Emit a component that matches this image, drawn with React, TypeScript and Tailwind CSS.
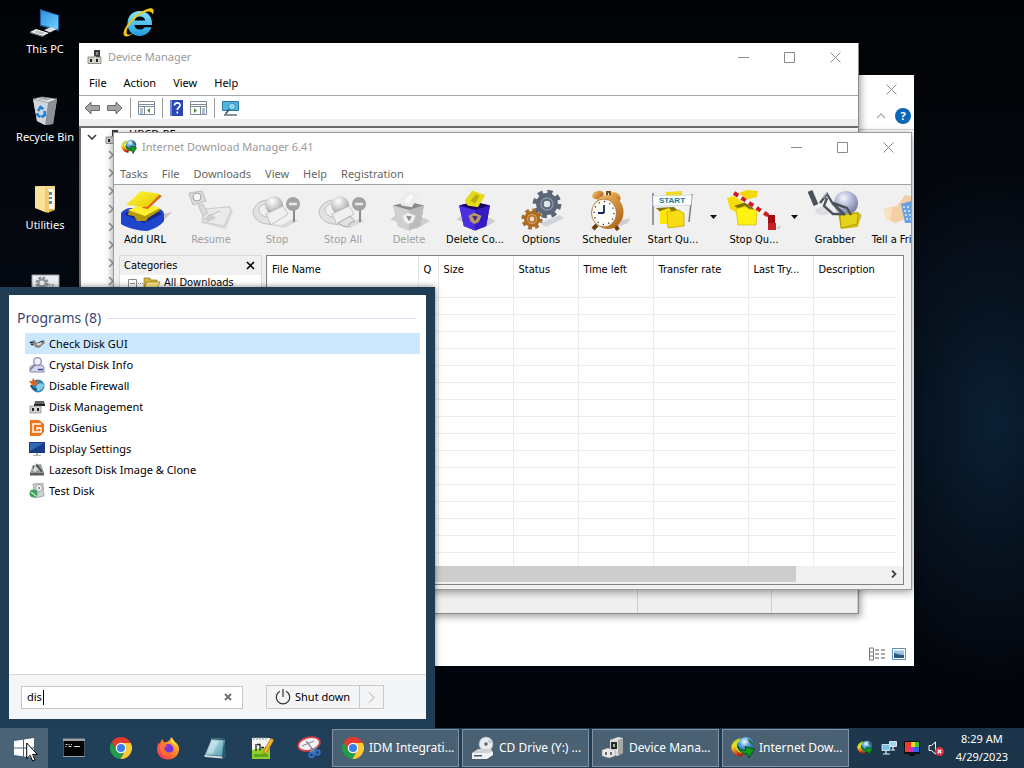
import type { ReactNode } from "react";

const ui = "font-['Noto_Sans','Open_Sans',sans-serif]";
const tahoma = "font-['DejaVu_Sans_Condensed','DejaVu_Sans',sans-serif]";

/* ---------- shared gradients ---------- */

function Gradients() {
  return (
    <svg className="absolute size-0" aria-hidden="true">
      <defs>
        <radialGradient id="globe" cx="0.4" cy="0.3" r="0.8">
          <stop offset="0" stopColor="#f2fbff" />
          <stop offset="0.4" stopColor="#5aa2dc" />
          <stop offset="1" stopColor="#0c3f8d" />
        </radialGradient>
        <radialGradient id="greyBall" cx="0.4" cy="0.3" r="0.8">
          <stop offset="0" stopColor="#ffffff" />
          <stop offset="0.6" stopColor="#c2c2c2" />
          <stop offset="1" stopColor="#868686" />
        </radialGradient>
        <radialGradient id="steelBall" cx="0.4" cy="0.3" r="0.8">
          <stop offset="0" stopColor="#f4f6ff" />
          <stop offset="0.5" stopColor="#a9b0d0" />
          <stop offset="1" stopColor="#626a90" />
        </radialGradient>
        <linearGradient id="rainbowArc" x1="0" y1="0" x2="0.4" y2="1">
          <stop offset="0" stopColor="#3fae3a" />
          <stop offset="0.4" stopColor="#f6e11c" />
          <stop offset="0.75" stopColor="#e86a17" />
          <stop offset="1" stopColor="#b91f16" />
        </linearGradient>
        <linearGradient id="screen" x1="0" y1="0" x2="1" y2="1">
          <stop offset="0" stopColor="#2f8ede" />
          <stop offset="1" stopColor="#6fd0ff" />
        </linearGradient>
        <linearGradient id="yellowSheet" x1="0" y1="0" x2="1" y2="1">
          <stop offset="0" stopColor="#fffb3a" />
          <stop offset="1" stopColor="#e8c400" />
        </linearGradient>
        <linearGradient id="orange" x1="0" y1="0" x2="1" y2="1">
          <stop offset="0" stopColor="#f9c46a" />
          <stop offset="1" stopColor="#a95a10" />
        </linearGradient>
        <linearGradient id="flame" x1="1" y1="0" x2="0" y2="1">
          <stop offset="0" stopColor="#ffe23c" />
          <stop offset="0.5" stopColor="#ff7a25" />
          <stop offset="1" stopColor="#f0236b" />
        </linearGradient>
        <linearGradient id="teal" x1="0" y1="0" x2="1" y2="1">
          <stop offset="0" stopColor="#d9f2f6" />
          <stop offset="1" stopColor="#4d9bb0" />
        </linearGradient>
        <linearGradient id="ieBlue" x1="0" y1="0" x2="0" y2="1">
          <stop offset="0" stopColor="#8be6fb" />
          <stop offset="1" stopColor="#1e9be0" />
        </linearGradient>
      </defs>
    </svg>
  );
}

/* ---------- desktop icons ---------- */

function ThisPcIcon() {
  return (
    <svg viewBox="0 0 32 32" className="size-8">
      <path d="m11 2 19 6v16l-19-5z" fill="#1d5f9c" />
      <path d="m12 3.400 17 5.100v13.800l-17-4.500z" fill="url(#screen)" />
      <path d="m15 23 7-3 6 2-7 3.500z" fill="#d9dde2" />
      <path d="m1 25 6-3 13 4-6 3z" fill="#eceff2" />
      <path d="m1 25 13 4v1L1 26z" fill="#9aa0a8" />
      <path d="m5 25 3-1.500 8 2.500-3 1.400z" fill="#b9bec5" />
    </svg>
  );
}

function RecycleBinIcon() {
  return (
    <svg viewBox="0 0 32 32" className="size-8">
      <path d="m4 4 24 0-4 25-8 1-8-4z" fill="#b7bbc0" />
      <path d="m19 7 9-3-4 25-8 1z" fill="#8d9197" />
      <path d="m4 4 15 3-3 23-8-4z" fill="#d2d5d9" />
      <path d="m4 4 9-2 15 2-9 3.500z" fill="#f2f3f4" stroke="#7d8085" strokeWidth="0.700" />
      <path d="m8 4 5-1.500 10 1.500-5 1.500z" fill="#a3a7ac" />
      <g fill="none" stroke="#1d83d6" strokeWidth="2.600">
        <path d="m9 16 2.500-4 3 2" />
        <path d="m15.500 16 .5 4-3.500 2" />
        <path d="M11.500 22 8.500 20v-2" />
      </g>
    </svg>
  );
}

function UtilitiesIcon() {
  return (
    <svg viewBox="0 0 32 32" className="size-8">
      <path d="M6 3h20v24l-5 2-15-4z" fill="#dcb24e" />
      <path d="M16 3h10v22H16z" fill="#f4d98a" />
      <path d="M18 6h7v20h-7z" fill="#f8fbff" />
      <path d="M20 9h3v3h-3zM20 14h3v2h-3zM20 18h3v3h-3z" fill="#4b8bc8" />
      <path d="M6 3.500 17 3v26.500L6 25z" fill="#fbe29a" />
      <path d="M16 3v26l4 1V8z" fill="#efcb6c" />
    </svg>
  );
}

function GearFileIcon() {
  return (
    <svg viewBox="0 0 32 32" className="size-8">
      <path d="M3 4h27v28H3z" fill="#eceff1" stroke="#9aa0a5" />
      <circle cx="13" cy="12" r="5" fill="none" stroke="#8c9399" strokeWidth="3" strokeDasharray="2.600 1.300" />
      <circle cx="13" cy="12" r="3.500" fill="none" stroke="#8c9399" strokeWidth="2" />
      <circle cx="22" cy="18" r="4" fill="none" stroke="#a6adb2" strokeWidth="3" strokeDasharray="2 1.200" />
    </svg>
  );
}

function IeIcon() {
  return (
    <svg viewBox="0 0 32 32" className="size-8">
      <path
        d="M29 18H11.500c.2 3 2.400 4.600 5.400 4.600 2.200 0 3.800-.9 4.700-2.300h6.800C26.700 25.600 22.200 29 16.700 29 9.500 29 4.500 24 4.500 16.500S9.500 4 16.700 4C24.200 4 29 9 29 16.500zM11.600 13.400h10.600c-.4-2.500-2.400-4-5.200-4-2.900 0-4.900 1.500-5.400 4z"
        fill="url(#ieBlue)"
      />
      <path
        d="M26 1.500c4-1.200 5.800 1.200 4 6C28.500 3.600 24 3 16.500 8 9 13 3.600 20.500 3.600 25.500c.2 3.400 3.700 2.300 7 .8-4 3.200-9.800 4.800-10 .8C.3 20.500 12 5.200 26 1.500z"
        fill="#f2c70f"
      />
    </svg>
  );
}

/* ---------- application icons ---------- */

function IdmIcon({ className }: { className: string }) {
  return (
    <svg viewBox="0 0 24 24" className={className}>
      <circle cx="15" cy="9" r="8" fill="url(#globe)" />
      <path d="M17 3c3 1 5 3 5.500 6-2 0-3-2-4.500-3z" fill="#2d6a3c" />
      <path d="M10 2C3 3 0 8 .5 12.500 1.500 17 5 20 11 21l1-4c-4-1-6.500-3-6.500-6.500C5.500 7 7.500 4 10 2z" fill="url(#rainbowArc)" />
      <path d="M9 4C6 6 4.500 9 5.500 12c1 2 3 4 6 5" fill="none" stroke="#c6ea3f" strokeWidth="1.500" />
      <path d="M7 10.500c2 3 5 4.500 8 3.500l-1-3.500 9.500 2.500-5.500 9-1.500-4C11 18 7.500 15 7 10.500z" fill="#149a1c" stroke="#053f0a" strokeWidth="0.800" />
    </svg>
  );
}

function ChromeIcon({ className }: { className: string }) {
  return (
    <svg viewBox="0 0 24 24" className={className}>
      <circle cx="12" cy="12" r="6" fill="#fff" />
      <path d="M12 7H21.800A11 11 0 0 0 2.770 6.010L7.670 14.500A5 5 0 0 1 12 7Z" fill="#e33b2e" />
      <path d="M2.770 6.010 7.670 14.500A5 5 0 0 0 16.330 14.500L11.430 22.990A11 11 0 0 1 2.770 6.010Z" fill="#239b4a" />
      <path d="M21.800 7H12A5 5 0 0 1 16.330 14.500L11.430 22.990A11 11 0 0 0 21.800 7Z" fill="#fcc934" />
      <circle cx="12" cy="12" r="5.200" fill="#fff" />
      <circle cx="12" cy="12" r="4" fill="#3b7ded" />
    </svg>
  );
}

function DeviceIcon({ className }: { className: string }) {
  return (
    <svg viewBox="0 0 16 16" className={className}>
      <path d="M7 1h6v7H7z" fill="#3c3c3c" />
      <path d="M9 3h2v3H9z" fill="#8c8c8c" />
      <path d="M1 8h6V7h2v1h5v6.500H1z" fill="#d6d4cf" stroke="#6c6a66" strokeWidth="0.700" />
      <path d="M3 10h2v3H3zM9 10h2v3H9z" fill="#222" />
    </svg>
  );
}

function DeviceLargeIcon() {
  return (
    <svg viewBox="0 0 24 24" className="size-6">
      <path d="m9 4 8-3 5 1v15l-6 3-7-3z" fill="#dfe0dd" />
      <path d="m17 4 5-2v15l-5 3z" fill="#a6a8a6" />
      <path d="M10 6h6v7h-6z" fill="#252a26" />
      <path d="M12 8h2v3h-2z" fill="#9fbf97" />
      <path d="m1 14 6-2 7 2v6l-6 2-7-2z" fill="#e9e9e7" stroke="#85878a" strokeWidth="0.500" />
      <path d="M4 16h2v3H4zM9 16h2v3H9z" fill="#6a6d70" />
    </svg>
  );
}

function CdDriveIcon() {
  return (
    <svg viewBox="0 0 24 24" className="size-6">
      <circle cx="15" cy="8" r="7" fill="#e7eaec" stroke="#a6abb0" strokeWidth="0.600" />
      <path d="m15 8 4-5.500a7 7 0 0 1 3 4z" fill="#bfd2dc" />
      <circle cx="15" cy="8" r="2.400" fill="#5c7385" stroke="#fff" />
      <path d="m1 17 6-4h13l2 3-5 5H2z" fill="#cfd2d5" />
      <path d="M1 17h15l6-1v3l-6 4H1z" fill="#f1f2f3" />
      <path d="M3 19h8v1.500H3z" fill="#50565c" />
    </svg>
  );
}

function FirefoxIcon() {
  return (
    <svg viewBox="0 0 24 24" className="size-6">
      <path
        d="M15 1c2 1.500 3 3 3.500 4.500C21 7 23.500 10 23 14c-.6 5.500-5 9.500-11 9.500S1 19.500 1 13.500c0-3 1-5.500 2-7l.8 1.800C4.500 6 5 4.500 6.500 3c.2 1.600.8 2.600 2 3.500C11 6 14.500 5 15 1z"
        fill="url(#flame)"
      />
      <circle cx="12.500" cy="13" r="5" fill="#7a35d8" />
      <path d="M4 9c3-2 6-1 7.500 1-2 .3-3 1.200-3.200 2.500C9 16 13 18 17 15c-1 4-4 5-7 4.500C6 19 3.500 15 4 9z" fill="#ff7139" />
      <path d="M15 2c2 2 5 5 5.500 9-1-2-3-4-5-5z" fill="#fff04a" />
    </svg>
  );
}

function CmdIcon() {
  return (
    <svg viewBox="0 0 24 24" className="size-6">
      <path d="M1 2.500h22v18.500H1z" fill="#9aa0a6" />
      <path d="M1.500 5h21v15h-21z" fill="#050505" />
      <path d="M3.500 8.500h2M6.500 8.500h1M9 8.500h1M3.500 10.500h1M6.500 10.500h3M12 10.500h6" stroke="#dcdcdc" strokeWidth="1.200" />
    </svg>
  );
}

function NotepadIcon() {
  return (
    <svg viewBox="0 0 24 24" className="size-6">
      <path d="m9 2 13 1-1 17-19-1z" fill="url(#teal)" />
      <path d="m1 19 18 1.500 1 2L2 21z" fill="#d6e4e7" />
      <path d="m9 2 13 1-.3 1.500L8.500 3.500z" fill="#31606e" />
      <path d="m21 3 2 18-3 2-1-3z" fill="#285a69" />
      <path d="m10 5 6 .5-6 12-6-.5z" fill="#fff" opacity="0.350" />
    </svg>
  );
}

function NotepadPlusIcon() {
  return (
    <svg viewBox="0 0 24 24" className="size-6">
      <path d="M2 2h18v21H2z" fill="#f6f7f3" />
      <path d="M2 14c6-2 12-1 18-4v13H2z" fill="#8fd02f" />
      <path d="M4 18h14v3H4z" fill="#5ba81d" />
      <path d="M4 1v3M7 1v3M10 1v3M13 1v3M16 1v3" stroke="#8d8d8d" />
      <path d="M6 8v7M7 8.500h3v6M11 11.500h3M15 11.500h2" fill="none" stroke="#222" strokeWidth="1.300" />
      <path d="m21 2 3 2-7 12-3 2v-4z" fill="#f0b429" stroke="#8d5a13" strokeWidth="0.500" />
    </svg>
  );
}

function SnipIcon() {
  return (
    <svg viewBox="0 0 24 24" className="size-6">
      <ellipse cx="12" cy="8" rx="11" ry="6.500" transform="rotate(-14 12 8)" fill="#f7f4f4" stroke="#d0414a" strokeWidth="1.800" />
      <path d="m5 10 12-5M9 5l8 10" stroke="#888e99" strokeWidth="1.300" />
      <path d="m14 12 4 5M20 11l-7 5" stroke="#7c8ea6" strokeWidth="1.600" />
      <circle cx="14.500" cy="19" r="2.300" fill="none" stroke="#2f74c9" strokeWidth="1.900" />
      <circle cx="20.500" cy="16.500" r="2.300" fill="none" stroke="#2f74c9" strokeWidth="1.900" />
    </svg>
  );
}

/* ---------- window caption buttons ---------- */

function CaptionButtons() {
  return (
    <div className="flex text-[#8a8a8a]">
      <button aria-label="Minimize" className="flex h-7 w-[46px] items-center justify-center">
        <svg viewBox="0 0 11 11" className="size-[11px]"><path d="M0 5.500h11" stroke="currentColor" /></svg>
      </button>
      <button aria-label="Maximize" className="flex h-7 w-[46px] items-center justify-center">
        <svg viewBox="0 0 11 11" className="size-[11px]"><path d="M.5.500h10v10H.500z" fill="none" stroke="currentColor" /></svg>
      </button>
      <CloseButton />
    </div>
  );
}

function CloseButton() {
  return (
    <button aria-label="Close" className="flex h-7 w-[46px] items-center justify-center text-[#8a8a8a]">
      <svg viewBox="0 0 11 11" className="size-[11px]"><path d="m.5.500 10 10M10.500.500l-10 10" stroke="currentColor" /></svg>
    </button>
  );
}

/* ---------- explorer window ---------- */

function ExplorerWindow() {
  return (
    <section className="absolute top-[75px] left-[200px] flex h-[591px] w-[714px] flex-col bg-white">
      <div className="flex justify-end"><CloseButton /></div>
      <div className="flex h-[26px] items-center justify-end gap-[9px] pr-[3px]">
        <svg viewBox="0 0 10 6" className="h-[6px] w-[10px]"><path d="m1 5 4-4 4 4" fill="none" stroke="#b5b5b5" strokeWidth="1.500" /></svg>
        <button aria-label="Help" className="flex size-4 items-center justify-center rounded-full bg-[#0a67b8] text-[11px] font-bold text-white">?</button>
      </div>
      <div className="flex-1 border-t border-[#d8d8d8]" />
      <div className="flex items-center justify-end gap-1.5 pr-2 pb-[5px]">
        <svg viewBox="0 0 17 14" className="h-[14px] w-[17px]">
          <path d="M.5 1h4v12h-4zM.5 5h4M.5 9h4" fill="none" stroke="#777" />
          <path d="M6 3h4M12 3h4M6 7h4M12 7h4M6 11h4M12 11h4" stroke="#555" />
        </svg>
        <svg viewBox="0 0 14 12" className="h-3 w-[14px]">
          <path d="M.5.500h13v11H.500z" fill="#fff" stroke="#5e92ba" />
          <path d="M2 2.500h10v7H2z" fill="#9cc3e6" />
          <path d="M2 5c4 1 6 2 10 2v3H2z" fill="#2b5a80" />
        </svg>
      </div>
    </section>
  );
}

/* ---------- device manager ---------- */

function DeviceToolbar() {
  const divider = <span className="h-5 w-px bg-[#9a9a9a]" />;
  return (
    <div className="flex h-[23px] items-center gap-[7px] pl-[5px]">
      <button aria-label="Back">
        <svg viewBox="0 0 16 14" className="h-[14px] w-4"><path d="m1 7 6-6v3.500h8.500v5H7V13z" fill="#a5a5a5" stroke="#6b6b6b" /></svg>
      </button>
      <button aria-label="Forward">
        <svg viewBox="0 0 16 14" className="h-[14px] w-4"><path d="M15 7 9 1v3.500H.500v5H9V13z" fill="#a5a5a5" stroke="#6b6b6b" /></svg>
      </button>
      {divider}
      <button aria-label="Show console tree">
        <svg viewBox="0 0 17 14" className="h-[14px] w-[17px]">
          <path d="M.5.500h16v13H.500zM.5 3.500h16M6.500 6v7M.5 5.500h16" fill="none" stroke="#7e8a94" />
          <path d="M2 8h3M2 10h3M2 12h3" stroke="#5d7fa4" />
          <path d="M12 7v5l-3-2.500z" fill="#4a8f38" />
        </svg>
      </button>
      {divider}
      <button aria-label="Help topics">
        <svg viewBox="0 0 13 16" className="h-4 w-[13px]">
          <path d="M0 0h13v16H0z" fill="#2a49b0" />
          <path d="M0 0h2v16H0z" fill="#6f88da" />
          <path d="M4.500 5.500c0-3.500 5.500-3.500 5.500-.3C10 7.500 7.300 7.500 7.300 10M7.300 11.500v2" fill="none" stroke="#fff" strokeWidth="1.700" />
        </svg>
      </button>
      <button aria-label="Show action pane">
        <svg viewBox="0 0 17 14" className="h-[14px] w-[17px]">
          <path d="M.5.500h16v13H.500zM.5 3.500h16M10.500 6v7M.5 5.500h16" fill="none" stroke="#7e8a94" />
          <path d="M12 8h3M12 10h3M12 12h3" stroke="#5d7fa4" />
          <path d="M4 7v5l3-2.500z" fill="#4a8f38" />
        </svg>
      </button>
      {divider}
      <button aria-label="Scan for hardware changes">
        <svg viewBox="0 0 17 16" className="h-4 w-[17px]">
          <path d="M.5 1.500h16v9H.500z" fill="#4fb7e4" stroke="#31779c" />
          <path d="M2 15h13" stroke="#60707a" strokeWidth="1.500" />
          <circle cx="10" cy="6.500" r="3.500" fill="#8fd6f2" stroke="#3c8fb4" />
          <path d="m7.500 9-4 5" stroke="#38586a" strokeWidth="1.500" />
        </svg>
      </button>
    </div>
  );
}

function DeviceManagerWindow() {
  return (
    <section className="absolute top-[43px] left-[79px] flex h-[571px] w-[780px] flex-col border-r border-b border-[#8b8b8b] bg-white shadow-[2px_3px_7px_rgba(0,0,0,0.35)]">
      <header className="flex items-center justify-between pl-2">
        <h2 className="flex items-center gap-[5px] text-[#999]">
          <DeviceIcon className="size-4" />Device Manager
        </h2>
        <CaptionButtons />
      </header>
      <nav className="flex h-6 items-center gap-[17px] pl-2.5 text-black">
        <button>File</button><button>Action</button><button>View</button><button>Help</button>
      </nav>
      <div className="border-t border-[#a8a8a8]"><DeviceToolbar /></div>
      <div className="h-[7px] bg-[#efefef]" />
      <div className="flex-1 border-t-2 border-l-2 border-[#6d6d6d] pl-1.5">
        <div className="flex h-[18px] items-center gap-2">
          <svg viewBox="0 0 10 6" className="h-[6px] w-[10px]"><path d="m1 1 4 4 4-4" fill="none" stroke="#444" strokeWidth="1.700" /></svg>
          <DeviceIcon className="size-4" />
          <span className="self-start leading-3">HBCD-PE</span>
        </div>
        <ul className="pl-[18px]">
          {[0, 1, 2, 3, 4, 5, 6, 7].map((n) => (
            <li key={n} className="flex h-[18px] items-center pl-[3px]">
              <svg viewBox="0 0 6 10" className="h-[10px] w-[6px]"><path d="m1 1 4 4-4 4" fill="none" stroke="#a0a0a0" strokeWidth="1.700" /></svg>
            </li>
          ))}
        </ul>
      </div>
      <footer className="flex h-[24px] justify-end bg-[#efefef]">
        <span className="w-[134px] border-l border-[#cfcfcf]" />
        <span className="w-[87px] border-x border-[#cfcfcf]" />
      </footer>
    </section>
  );
}

/* ---------- download manager toolbar art ---------- */

function AddUrlArt() {
  return (
    <svg viewBox="0 0 54 44" className="h-11 w-[54px]">
      <path d="m42 26 12-3-12 12z" fill="#c4c4c4" />
      <path d="M3 24c2-3 6-5 10-5h25c4 0 8 3 8 6v7c-4 5-10 8-17 10-8 0-20-3-26-7z" fill="#1f45cc" />
      <path d="m6 25 8-4h25l5 4-18 9z" fill="#12298c" />
      <path d="m10 26 6 1 3 5 9 0 2-3 13-8-14-7-18 7z" fill="#b79a00" />
      <path d="m10 21 17-6 15 4-15 8z" fill="#fff12e" />
      <path d="m40 5 4 2-14 13-6-1z" fill="#d86a20" />
      <path d="M8 16 23 2l19 3-13 13z" fill="url(#yellowSheet)" />
    </svg>
  );
}

function ResumeArt() {
  return (
    <svg viewBox="0 0 54 44" className="h-11 w-[54px]">
      <path d="m19 20 27-3 3 5-7 18-25-6z" fill="#d9d9d9" />
      <path d="m20 20 25-2 2 3-7 16-21-4z" fill="#eaeaea" stroke="#c4c4c4" strokeWidth="0.700" />
      <path d="M5 4 18 2l4 10-13 4z" fill="#dcdcdc" stroke="#b2b2b2" strokeWidth="0.800" />
      <circle cx="13" cy="8" r="4" fill="#f8f8f8" stroke="#a0a0a0" />
      <path d="m14 16 5-1 5 9-5 3z" fill="#dadada" stroke="#b8b8b8" strokeWidth="0.700" />
      <path d="m19 30 8-5 5 4-8 4z" fill="#cfcfcf" />
      <path d="m24 27 12-5" stroke="#bebebe" />
    </svg>
  );
}

function StopArt({ all = false }: { all?: boolean }) {
  return (
    <svg viewBox="0 0 54 44" className="h-11 w-[54px]">
      <path d="m12 34 20 2 12-7 4 3-14 7z" fill="#d9d9d9" />
      <path d="M3 23c1-7 8-12 15-12l-3 4c-4 1-7 4-6 7 1 4 6 7 12 6v7C12 36 3 30 3 23z" fill="#e2e2e2" stroke="#b0b0b0" strokeWidth="0.800" />
      <circle cx="24" cy="16" r="9" fill="url(#greyBall)" />
      <path d="m16 25 17-8 5 8-17 11z" fill="#f0f0f0" stroke="#b5b5b5" strokeWidth="0.800" />
      {all && <path d="m22 34 12-7 5 5-5 2-2 4-5-1z" fill="#e1e1e1" stroke="#999" strokeWidth="0.800" />}
      <path d="M44 18v15" stroke="#8a8a8a" strokeWidth="2" />
      <circle cx="43" cy="15" r="7" fill="#a2a2a2" />
      <path d="M39 15h8" stroke="#e9e9e9" strokeWidth="2.500" />
    </svg>
  );
}

function BinArt({ colored = false }: { colored?: boolean }) {
  return (
    <svg viewBox="-1 0 58 46" className="h-11 w-[54px]">
      <path d="m8 32 8-6 30 5 4 3-14 8z" fill="#cecece" />
      <path d="m11 17 16-4 17 4-4 22-12 5-12-5z" fill={colored ? "#2c12a8" : "#b2b2b2"} />
      <path d="m11 17 16-4 17 4-16 5z" fill={colored ? "#17075f" : "#8b8b8b"} />
      <path d="M17 12 25 1l14 5-8 13-11-2z" fill={colored ? "#e4d91a" : "#ececec"} />
      <path d="m23 12 6-7 4 2-5 8z" fill={colored ? "#b8b00a" : "#f9f9f9"} />
      <path d="m11 17 17 5v22l-12-5z" fill={colored ? "#4a2fe0" : "#d0d0d0"} />
      <path d="m44 17-16 5v22l12-5z" fill={colored ? "#351bc4" : "#bcbcbc"} />
      <path d="m21 28 6-3 8 3-3 7-5 2-4-3z" fill={colored ? "#b59a68" : "#f0f0f0"} />
      <path d="m25 28 6 1-3 5z" fill={colored ? "#40258c" : "#8a8a8a"} />
    </svg>
  );
}

function Gear({ cx, cy, r, fill, hole }: { cx: number; cy: number; r: number; fill: string; hole: string }) {
  return (
    <g>
      <circle cx={cx} cy={cy} r={r} fill="none" stroke={fill} strokeWidth={r * 0.5} strokeDasharray={`${r * 0.42} ${r * 0.365}`} />
      <circle cx={cx} cy={cy} r={r * 0.6} fill="none" stroke={fill} strokeWidth={r * 0.7} />
      <circle cx={cx} cy={cy} r={r * 0.28} fill={hole} />
    </g>
  );
}

function OptionsArt() {
  return (
    <svg viewBox="0 0 54 44" className="h-11 w-[54px]">
      <path d="m26 34 20-8 4 3-18 9z" fill="#d0d4dc" />
      <Gear cx={33} cy={15} r={11.5} fill="#5b6779" hole="#dfe3ea" />
      <circle cx="33" cy="15" r="6" fill="none" stroke="#8793a6" strokeWidth="1.500" />
      <Gear cx={18} cy={30} r={8.5} fill="#ab6a26" hole="#f0dcc4" />
      <circle cx="18" cy="30" r="4.500" fill="none" stroke="#d59a53" strokeWidth="1.300" />
    </svg>
  );
}

function SchedulerArt() {
  return (
    <svg viewBox="0 0 54 44" className="h-11 w-[54px]">
      <path d="m38 32 12-3-2 5-12 5z" fill="#cfcfd4" />
      <path d="m17 36-4 4M35 36l3 5" stroke="#6b3a0a" strokeWidth="4" />
      <ellipse cx="18" cy="6" rx="6" ry="4" transform="rotate(-20 18 6)" fill="url(#orange)" />
      <ellipse cx="35" cy="8" rx="6" ry="4.500" transform="rotate(32 35 8)" fill="url(#orange)" />
      <path d="M27 7V3h3v4" fill="none" stroke="#7d4a14" strokeWidth="2" />
      <ellipse cx="28" cy="23" rx="15.500" ry="17" fill="url(#orange)" />
      <ellipse cx="24" cy="24" rx="12.500" ry="14" fill="#fffdf8" stroke="#95520f" strokeWidth="0.700" />
      <ellipse cx="24" cy="24" rx="10" ry="11.500" fill="none" stroke="#3a3a3a" strokeWidth="1.300" strokeDasharray="1.300 4.300" />
      <path d="M24 24v-8M24 24h-6" stroke="#10256e" strokeWidth="1.800" />
    </svg>
  );
}

function StartQueueArt() {
  return (
    <svg viewBox="0 0 54 44" className="h-11 w-[54px]">
      <path d="M7 4v32M46 5l-3 28" stroke="#777b8a" strokeWidth="1.500" />
      <path d="m20 3 16-1v6H20z" fill="#efdc20" />
      <path d="m10 19 18-1 8 8-14 4z" fill="#857210" />
      <path d="m14 22 9-3 3 4 12 0v12H14z" fill="#ffe60a" />
      <path d="m21 23 12-2 5 4v12l-16 2z" fill="#f7db13" stroke="#bc9e00" strokeWidth="0.700" />
      <path d="m7 7 39-1-1 10L7 17z" fill="#fafeff" stroke="#b2c3cc" strokeWidth="0.500" />
      <text x="26" y="14" textAnchor="middle" fill="#1b7896" className="text-[8px] font-bold font-['Liberation_Sans',sans-serif]">START</text>
    </svg>
  );
}

function StopQueueArt() {
  return (
    <svg viewBox="0 0 54 44" className="h-11 w-[54px]">
      <path d="m12 4 8-3 11 1-1 6-12 3z" fill="#f2d80a" />
      <path d="m0 9 7-2 6 4 7 7-6 8-11-6z" fill="#f6dc0b" />
      <path d="m7 17 12-4 9 5-6 7z" fill="#827108" />
      <path d="m9 20 9-3 4 3 8 1-1 15-18 0z" fill="#fff112" stroke="#cbb100" strokeWidth="0.600" />
      <path d="m7 4 38 25" stroke="#f6f2f2" strokeWidth="4" />
      <path d="m7 4 38 25" stroke="#ce1a21" strokeWidth="4" strokeDasharray="5 4" />
      <path d="M41 26h7v10h-7z" fill="#a30b12" />
      <path d="M41 34h8v7h-8z" fill="#c32228" />
      <path d="m49 40 4-4v4z" fill="#ccc" />
    </svg>
  );
}

function GrabberArt() {
  return (
    <svg viewBox="0 0 54 44" className="h-11 w-[54px]">
      <ellipse cx="15" cy="22" rx="8" ry="4" fill="#dddde2" />
      <path d="m46 36 6-12 2 3-5 10z" fill="#c8c8c8" />
      <circle cx="38" cy="14" r="12" fill="url(#steelBall)" />
      <path d="m30 25 20-2 3 3-3 12-17 2z" fill="#d3bf0c" />
      <path d="m32 26 18-2-1 11-16 4z" fill="#e6d41c" stroke="#998900" strokeWidth="0.700" />
      <path d="m2 2 6 14" stroke="#4b515a" strokeWidth="5" />
      <path d="m12 14 7-9 6 10 12 11M19 9l-3 8 9 8 11 0M25 14l14 5 4 7" fill="none" stroke="#4d535d" strokeWidth="2.400" />
      <path d="m15 9 4-5" stroke="#9aa0ab" strokeWidth="1.500" />
    </svg>
  );
}

function TellFriendArt() {
  return (
    <svg viewBox="0 0 54 44" className="h-11 w-[54px]">
      <path d="m9 20 14-3 8-11 10 2v26l-12-3-8 3-7-4z" fill="#f3cfa3" />
      <path d="m9 20 9-1-2 12-4 0z" fill="#f9e2c3" />
      <path d="m27 15 20-6v25l-16 0z" fill="#6aa1de" />
      <path d="M29 18h10M30 22h9M31 26h9M32 30h8" stroke="#d8ebff" strokeWidth="1.500" strokeDasharray="2 2" />
    </svg>
  );
}

type Tool = { label: string; art: ReactNode; disabled?: boolean; menu?: boolean };

const tools: Tool[] = [
  { label: "Add URL", art: <AddUrlArt /> },
  { label: "Resume", art: <ResumeArt />, disabled: true },
  { label: "Stop", art: <StopArt />, disabled: true },
  { label: "Stop All", art: <StopArt all />, disabled: true },
  { label: "Delete", art: <BinArt />, disabled: true },
  { label: "Delete Co...", art: <BinArt colored /> },
  { label: "Options", art: <OptionsArt /> },
  { label: "Scheduler", art: <SchedulerArt /> },
  { label: "Start Qu...", art: <StartQueueArt />, menu: true },
  { label: "Stop Qu...", art: <StopQueueArt />, menu: true },
  { label: "Grabber", art: <GrabberArt /> },
  { label: "Tell a Friend", art: <TellFriendArt /> },
];

function IdmToolbar() {
  return (
    <div className={`-ml-0.5 flex h-[70px] shrink-0 overflow-hidden ${tahoma}`}>
      {tools.map((tool) => (
        <div key={tool.label} className="flex shrink-0">
          <button
            disabled={tool.disabled}
            className="flex w-[66px] flex-col items-center pt-1 leading-[14px] whitespace-nowrap text-black disabled:text-[#a0a0a0]"
          >
            {tool.art}
            {tool.label}
          </button>
          {tool.menu && (
            <button aria-label={`${tool.label} menu`} className="flex w-[15px] justify-center pt-[30px]">
              <svg viewBox="0 0 7 4" className="h-1 w-[7px]"><path d="M0 0h7L3.500 4z" fill="#111" /></svg>
            </button>
          )}
        </div>
      ))}
    </div>
  );
}

const columns = [
  { name: "File Name", width: "w-[151px]" },
  { name: "Q", width: "w-5" },
  { name: "Size", width: "w-[75px]" },
  { name: "Status", width: "w-[65px]" },
  { name: "Time left", width: "w-[75px]" },
  { name: "Transfer rate", width: "w-[95px]" },
  { name: "Last Try...", width: "w-[65px]" },
  { name: "Description", width: "" },
];

function DownloadList() {
  return (
    <div className={`flex min-w-0 flex-1 flex-col border border-[#828282] bg-white ${tahoma}`}>
      <div className="flex-1 overflow-hidden pr-1.5">
        <table className="w-full table-fixed border-collapse">
          <thead>
            <tr className="h-6">
              {columns.map((c) => (
                <th
                  key={c.name}
                  className={`${c.width} border-r border-[#e2e2e2] pt-[3px] pl-[5px] text-left font-normal whitespace-nowrap last:border-r-0`}
                >
                  {c.name}
                </th>
              ))}
            </tr>
          </thead>
          <tbody>
            {Array.from({ length: 17 }, (_, row) => (
              <tr key={row} className="h-[17px] border-b border-[#ececec]">
                {columns.map((c) => (
                  <td key={c.name} className="border-r border-[#ececec] p-0 last:border-r-0" />
                ))}
              </tr>
            ))}
          </tbody>
        </table>
      </div>
      <div className="flex h-4 shrink-0 items-center justify-end bg-[#f0f0f0] pr-1.5">
        <div className="mr-[95px] h-full flex-1 bg-[#cdcdcd]" />
        <svg viewBox="0 0 6 8" className="h-2 w-[6px]"><path d="m1 .5 3.500 3.500L1 7.500" fill="none" stroke="#444" strokeWidth="1.800" /></svg>
      </div>
      <div className="h-[2px] bg-[#f0f0f0]" />
    </div>
  );
}

function IdmWindow() {
  return (
    <section className="absolute top-[132px] left-[113px] flex h-[458px] w-[799px] flex-col border border-[#9b9b9b] bg-[#f0f0f0] shadow-[0_2px_8px_rgba(0,0,0,0.4)]">
      <header className="flex items-center justify-between bg-white pl-[7px]">
        <h2 className="flex items-center gap-[5px] text-[#999]">
          <IdmIcon className="size-4" />Internet Download Manager 6.41
        </h2>
        <CaptionButtons />
      </header>
      <nav className="flex h-6 items-center gap-3.5 border-b border-[#a3a3a3] bg-white pt-0.5 pl-1.5 text-[#666]">
        <button>Tasks</button><button>File</button><button>Downloads</button>
        <button>View</button><button>Help</button><button>Registration</button>
      </nav>
      <IdmToolbar />
      <div className="flex min-h-0 flex-1 gap-1 pr-[7px] pb-1 pl-[5px]">
        <aside className={`w-[143px] border border-[#dadada] ${tahoma}`}>
          <div className="flex h-[19px] items-center justify-between pr-1.5 pl-1">
            <span>Categories</span>
            <button aria-label="Close categories">
              <svg viewBox="0 0 9 9" className="size-[9px]"><path d="m1 1 7 7M8 1 1 8" stroke="#000" strokeWidth="1.600" /></svg>
            </button>
          </div>
          <div className="flex h-4 items-center gap-1 bg-white pl-2">
            <svg viewBox="0 0 32 14" className="h-[14px] w-8">
              <path d="M.5 3.500h8v8h-8zM2 7.500h5" fill="#fff" stroke="#8a8a8a" />
              <path d="M10 7.500h6" stroke="#999" strokeDasharray="1 1" />
              <path d="M16 2h6l1 2h6v9H16z" fill="#d9b53c" stroke="#8f7420" strokeWidth="0.700" />
              <path d="M19 6h13l-3 7H16z" fill="#ffe987" stroke="#8f7420" strokeWidth="0.700" />
            </svg>
            <span>All Downloads</span>
          </div>
        </aside>
        <DownloadList />
      </div>
    </section>
  );
}

/* ---------- start menu ---------- */

function ProgramIcon({ children }: { children: ReactNode }) {
  return <svg viewBox="0 0 16 16" className="size-4 shrink-0">{children}</svg>;
}

const programs: { name: string; icon: ReactNode }[] = [
  {
    name: "Check Disk GUI",
    icon: (
      <ProgramIcon>
        <path d="m0 6 5-2 3 3 7-3 1 3-6 5-4-1-1-2-2 1z" fill="#85898c" />
        <path d="M1 6.500h3M2 8.500h2M9 7l5-2M8 10l5-3" stroke="#2a2c2e" strokeWidth="1.200" />
        <path d="m7 8 5-2 1 2-4 2z" fill="#d6dadd" />
      </ProgramIcon>
    ),
  },
  {
    name: "Crystal Disk Info",
    icon: (
      <ProgramIcon>
        <path d="m1 10 3-2h9l2 2v5H1z" fill="#d6d7ea" stroke="#6e6ea8" strokeWidth="0.800" />
        <circle cx="8.500" cy="4.500" r="3.800" fill="#eef1fb" stroke="#8d8fae" strokeWidth="1.300" />
        <path d="m6 8-5 5" stroke="#8083a5" strokeWidth="1.700" />
        <path d="M9 12.500h5" stroke="#4141a4" strokeWidth="1.500" />
      </ProgramIcon>
    ),
  },
  {
    name: "Disable Firewall",
    icon: (
      <ProgramIcon>
        <circle cx="9" cy="8" r="6.500" fill="#2b83b7" />
        <path d="M7 8c3-4 7-3 8-1-1 4-4 6-7 6z" fill="#83cdeb" />
        <path d="m0 3 3 0 1-3 3 4 3-2-2 5-4 1z" fill="#d8672a" />
        <path d="M2 7c1 4 4 5 6 4" fill="none" stroke="#19597f" strokeWidth="2" />
      </ProgramIcon>
    ),
  },
  {
    name: "Disk Management",
    icon: (
      <ProgramIcon>
        <path d="m6 2 9 0 1 4-4 1H5z" fill="#646464" />
        <path d="M5 5h11v2H5z" fill="#222" />
        <path d="M1 7h11v7H1z" fill="#d3d3d0" stroke="#777" strokeWidth="0.600" />
        <path d="M3 9h2v3H3zM8 9h2v3H8z" fill="#222" />
      </ProgramIcon>
    ),
  },
  {
    name: "DiskGenius",
    icon: (
      <ProgramIcon>
        <path d="M1 0h9l5 4v8l-4 4H1z" fill="#ed751c" />
        <path d="M12 4H4v8h8V8H8v2" fill="none" stroke="#fff" strokeWidth="1.400" />
      </ProgramIcon>
    ),
  },
  {
    name: "Display Settings",
    icon: (
      <ProgramIcon>
        <path d="M0 1h16v11H0z" fill="#183d82" />
        <path d="M1 2h14L1 10z" fill="#3268b5" />
        <path d="M7 12h2v2h3v1H4v-1h3z" fill="#a7b5c2" />
      </ProgramIcon>
    ),
  },
  {
    name: "Lazesoft Disk Image & Clone",
    icon: (
      <ProgramIcon>
        <path d="m1 11 3-8 8-1 3 9v1H1z" fill="#9ca09c" />
        <path d="m4 4 3 5 1-6 5 7" fill="none" stroke="#474d48" strokeWidth="1.400" />
        <path d="m6 3 3 4-2 3-3-1z" fill="#d9e0da" />
        <path d="M1 11h14v2.500H1z" fill="#5a5d5a" />
      </ProgramIcon>
    ),
  },
  {
    name: "Test Disk",
    icon: (
      <ProgramIcon>
        <path d="m4 1 10-1 1 13-9 2z" fill="#ccd0d1" stroke="#858a8c" strokeWidth="0.600" />
        <circle cx="10" cy="5" r="3.500" fill="#edf0f1" stroke="#8b9091" strokeWidth="0.800" />
        <circle cx="10" cy="5" r="1" fill="#777" />
        <circle cx="4.500" cy="10.500" r="4" fill="#3aa05c" />
        <path d="m2 9 5 4" fill="none" stroke="#c9efd4" strokeWidth="1.200" />
      </ProgramIcon>
    ),
  },
];

function StartMenu() {
  return (
    <section className="absolute bottom-0 left-0 flex h-[441px] w-[435px] flex-col bg-[#203d56] p-[9px] pt-2 shadow-[0_0_6px_rgba(0,0,0,0.5)]">
      <div className="flex flex-1 flex-col bg-white pt-3">
        <h2 className="flex items-center gap-1.5 pr-2.5 pl-2 text-[14px] leading-[22px] text-[#3d4572]">
          Programs (8)
          <span className="h-px flex-1 bg-[#d8dfee]" />
        </h2>
        <ul className="mt-1 pr-1.5 pl-4">
          {programs.map((p, i) => (
            <li key={p.name}>
              <button className={`flex h-[21px] w-full items-center gap-1 pl-1 text-left ${i === 0 ? "bg-[#cce8ff]" : ""}`}>
                {p.icon}
                {p.name}
              </button>
            </li>
          ))}
        </ul>
        <div className="mt-auto flex h-[45px] items-center gap-[23px] border-t border-[#dadada] bg-[#f4f5f6] px-3">
          <div className="flex h-[23px] w-[222px] items-center border border-[#c6c6c6] bg-white px-[5px]">
            <label className="flex min-w-0 flex-1 items-center">
              <span className="sr-only">Search programs</span>
              <input defaultValue="dis" className="w-4 bg-transparent outline-none" />
              <span className="h-[15px] w-px bg-black" />
            </label>
            <button aria-label="Clear search" className="px-[5px]">
              <svg viewBox="0 0 8 8" className="size-2"><path d="m1 1 6 6M7 1 1 7" stroke="#6e6e6e" strokeWidth="2" /></svg>
            </button>
          </div>
          <div className="flex h-6 border border-[#c9c9c9]">
            <button className="flex w-[92px] items-center gap-1 pl-2">
              <svg viewBox="0 0 16 16" className="size-4">
                <path d="M5 2.200A6.700 6.700 0 1 0 11 2.200M8 0v8" fill="none" stroke="#333" strokeWidth="1.200" />
              </svg>
              Shut down
            </button>
            <button aria-label="More power options" className="flex w-6 items-center justify-center border-l border-[#c9c9c9]">
              <svg viewBox="0 0 7 11" className="h-[11px] w-[7px]"><path d="m1 .500 5 5-5 5" fill="none" stroke="#a5a5a5" /></svg>
            </button>
          </div>
        </div>
      </div>
    </section>
  );
}

/* ---------- taskbar ---------- */

const pinned = [
  { name: "Command Prompt", icon: <CmdIcon /> },
  { name: "Chrome", icon: <ChromeIcon className="size-6" /> },
  { name: "Firefox", icon: <FirefoxIcon /> },
  { name: "Notepad", icon: <NotepadIcon /> },
  { name: "Notepad++", icon: <NotepadPlusIcon /> },
  { name: "Snipping Tool", icon: <SnipIcon /> },
];

const tasks = [
  { name: "IDM Integrati...", icon: <ChromeIcon className="size-6" /> },
  { name: "CD Drive (Y:) ...", icon: <CdDriveIcon /> },
  { name: "Device Mana...", icon: <DeviceLargeIcon /> },
  { name: "Internet Dow...", icon: <IdmIcon className="size-6" /> },
];

function Taskbar() {
  return (
    <footer className="relative flex h-10 items-stretch bg-linear-to-r from-[#203f59] via-[#213e57] to-[#1c3449] text-white">
      <button aria-label="Start" className="relative flex w-12 items-center justify-center bg-[#4b6376]">
        <svg viewBox="0 0 20 20" className="size-5">
          <path d="m0 3 9-1.300V9.500H0zM10 1.500 20 0v9.500H10zM0 10.500h9v7.800L0 17zM10 10.500h10V20l-10-1.500z" fill="#fff" />
        </svg>
        <svg viewBox="0 0 12 20" className="absolute top-3.5 left-[26px] h-5 w-3">
          <path d="M.7 1v15.500l3.500-3.200 2.400 5.700 2.400-1-2.400-5.600h4.700z" fill="#fff" stroke="#000" />
        </svg>
      </button>
      <div className="flex pl-0.5">
        {pinned.map((p) => (
          <button key={p.name} aria-label={p.name} className="flex w-[47px] items-center justify-center">{p.icon}</button>
        ))}
      </div>
      <div className="flex gap-[3px] py-px text-[12px]">
        {tasks.map((t) => (
          <button key={t.name} className="flex w-[127px] items-center gap-1 border border-[#8294a3] bg-[#4a6073] pl-2 whitespace-nowrap">
            {t.icon}
            {t.name}
          </button>
        ))}
      </div>
      <div className="flex flex-1 items-center justify-between pr-4 pl-2">
        <IdmIcon className="size-4" />
        <svg viewBox="0 0 16 16" className="size-4">
          <path d="M8.500 1.500h7v5h-7z" fill="#9fd4ee" stroke="#fff" strokeWidth="0.800" />
          <path d="M1 4.500h8v6H1z" fill="#7cc0e4" stroke="#e7f5fc" strokeWidth="0.800" />
          <path d="M5 11v2.500M2 14h7M12 7v2.500M10 10h4" stroke="#e7f5fc" strokeWidth="1.200" />
        </svg>
        <svg viewBox="0 0 16 16" className="size-4">
          <path d="M0 1h16v13H0z" fill="#111" />
          <path d="M1 2h6v5H1z" fill="#ed3c22" /><path d="M7 2h4v5H7z" fill="#e8df27" /><path d="M11 2h4v5h-4z" fill="#45c33c" />
          <path d="M1 7h5v5H1z" fill="#e0452f" /><path d="M6 7h4v5H6z" fill="#cb2ac4" /><path d="M10 7h5v5h-5z" fill="#2c63e6" />
          <path d="M5 15h6" stroke="#111" strokeWidth="2" />
        </svg>
        <svg viewBox="0 0 16 16" className="size-4">
          <path d="M1 5.500h2.500L7.500 2v12l-4-3.500H1z" fill="none" stroke="#fff" />
          <circle cx="11.500" cy="11.500" r="4.500" fill="#d9303a" />
          <path d="m9.700 9.700 3.600 3.600M13.300 9.700l-3.600 3.600" stroke="#fff" strokeWidth="1.300" />
        </svg>
        <time className="pl-1 text-center leading-[18px]">8:29 AM<br />4/29/2023</time>
      </div>
    </footer>
  );
}

/* ---------- desktop ---------- */

const desktopItems = [
  { name: "This PC", icon: <ThisPcIcon /> },
  { name: "", icon: <IeIcon /> },
  { name: "Recycle Bin", icon: <RecycleBinIcon /> },
  null,
  { name: "Utilities", icon: <UtilitiesIcon /> },
  null,
  { name: "", icon: <GearFileIcon /> },
];

export default function App() {
  return (
    <div className={`flex min-h-screen flex-col overflow-hidden bg-[#02040a] text-[11px] leading-[16px] text-black ${ui}`}>
      <Gradients />
      <main className="relative flex-1 bg-[radial-gradient(ellipse_150px_260px_at_97%_58%,#0b2034_0%,#07121f_50%,transparent_100%),linear-gradient(180deg,#020306_0%,#050a14_50%,#02040a_100%)]">
        <div className="grid w-[184px] auto-rows-[88px] grid-cols-2 gap-x-1">
          {desktopItems.map((item, i) =>
            item ? (
              <button key={i} aria-label={item.name || "Shortcut"} className="flex flex-col items-center justify-start pt-[7px] leading-5 text-white">
                {item.icon}
                {item.name}
              </button>
            ) : (
              <span key={i} />
            ),
          )}
        </div>
        <ExplorerWindow />
        <DeviceManagerWindow />
        <IdmWindow />
        <StartMenu />
      </main>
      <Taskbar />
    </div>
  );
}
